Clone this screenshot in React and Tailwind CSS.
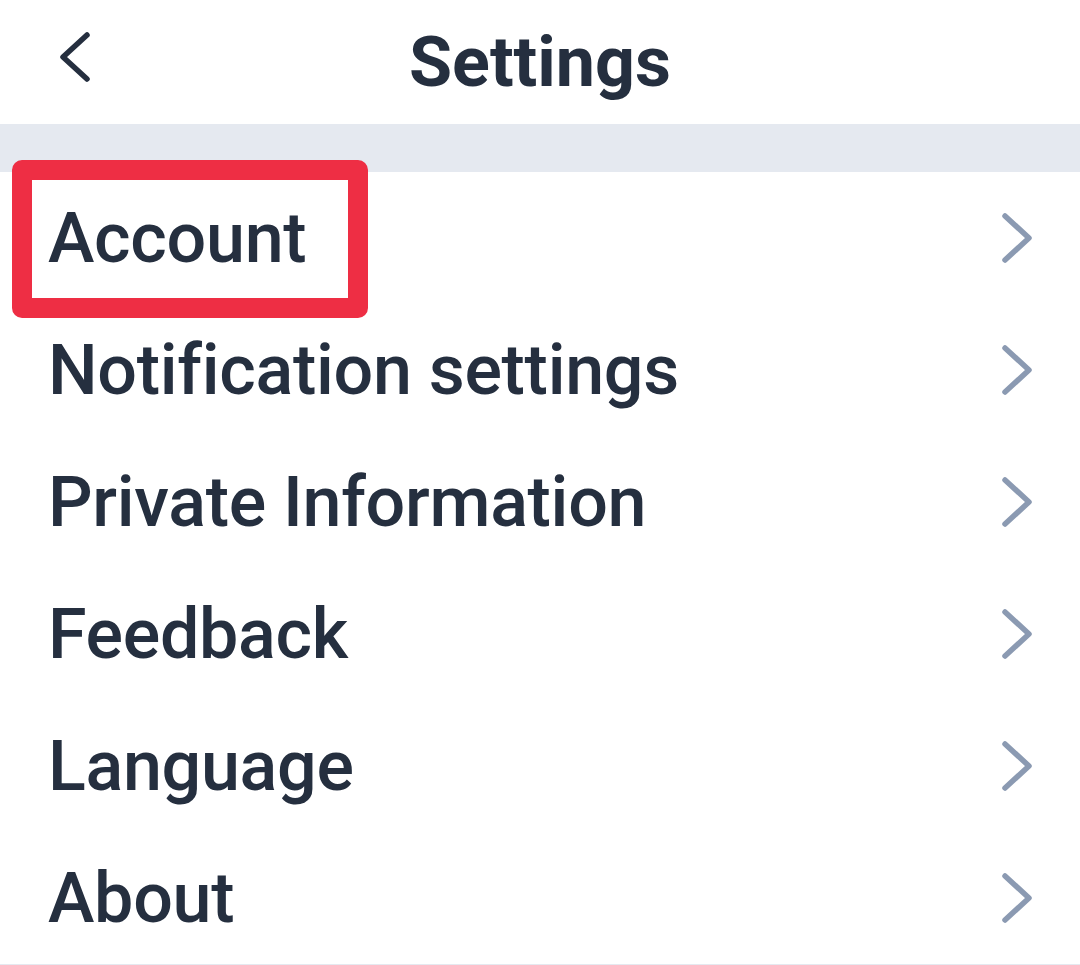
const ITEMS = ['Account', 'Notification settings', 'Private Information', 'Feedback', 'Language', 'About']

function Chevron({ dir = 'right', className }) {
  const pts = dir === 'right' ? '4,4 28,26 4,48' : '28,4 4,26 28,48'
  return (
    <svg width="32" height="52" viewBox="0 0 32 52" className={className} fill="none">
      <polyline points={pts} stroke="currentColor" strokeWidth="5.5" strokeLinecap="round" strokeLinejoin="round" />
    </svg>
  )
}

export default function App() {
  return (
    <div className="min-h-[965px] w-[1080px] bg-white font-['Roboto',sans-serif] text-[#252f3f]">
      <header className="relative flex h-[124px] items-center justify-center">
        <button className="absolute left-[59px] top-[31px] text-[#252f3f]">
          <Chevron dir="left" />
        </button>
        <h1 className="text-[70px] font-bold leading-none">Settings</h1>
      </header>
      <div className="h-[48px] bg-[#e5e9f0]" />
      <ul className="border-b-2 border-[#e5e9f0]">
        {ITEMS.map((label, i) => (
          <li key={label} className="relative flex h-[132px] items-center justify-between pl-[48px] pr-[47px]">
            <span className="text-[70px] font-medium leading-none tracking-[-0.3px]">{label}</span>
            <Chevron className="text-[#8b9ab2]" />
            {i === 0 && (
              <div className="pointer-events-none absolute left-[12px] top-[-12px] h-[158px] w-[356px] rounded-[10px] border-[20px] border-[#ee2e44]" />
            )}
          </li>
        ))}
      </ul>
    </div>
  )
}
